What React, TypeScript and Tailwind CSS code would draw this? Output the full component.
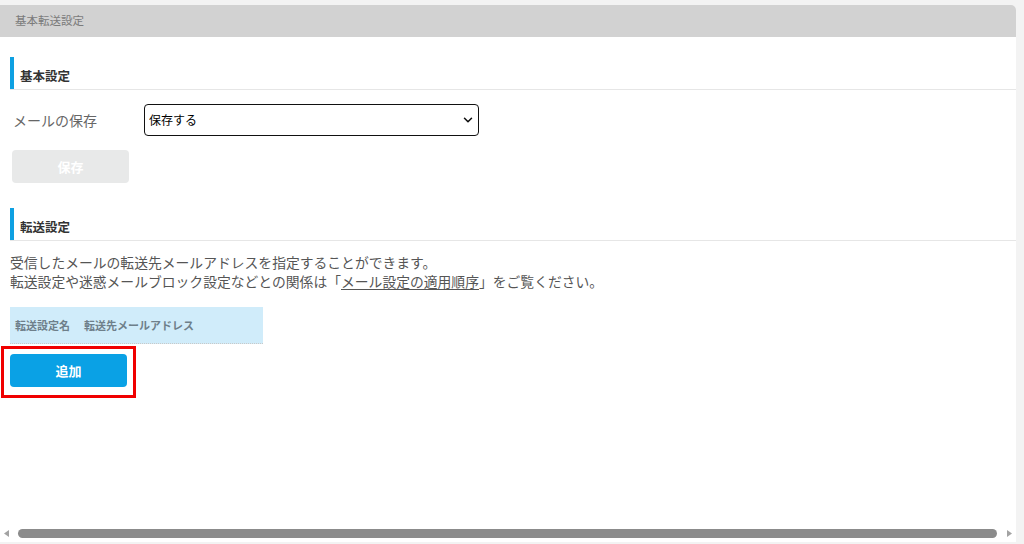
import { ChevronDown } from 'lucide-react';

const font = 'font-["Noto_Sans_CJK_JP","Noto_Sans",sans-serif]';

function SectionHeading({ title }: { title: string }) {
  return (
    <div className="flex h-[33px] border-b border-[#e6e6e6]">
      <div className="w-[4px] bg-[#0ea0e2]" />
      <h3 className="pl-[6px] pt-[11px] text-[12.5px] font-bold leading-[16px] text-[#333]">
        {title}
      </h3>
    </div>
  );
}

export default function App() {
  return (
    <div
      className={`h-[544px] w-[1024px] overflow-hidden bg-[#f3f3f3] pt-[5px] ${font}`}
    >
      <div className="flex h-[537px] w-[1016px] flex-col overflow-hidden rounded-tr-[5px] bg-white">
        <div className="flex h-[32px] shrink-0 items-center bg-[#d2d2d2] px-[15px] text-[11.5px] text-[#7b7b7b]">
          基本転送設定
        </div>

        <div className="flex-1 pl-[10px] pt-[20px]">
          <SectionHeading title="基本設定" />

          <div className="mt-[14px] flex items-center">
            <label className="w-[134px] pl-[3px] text-[14px] text-[#666]">
              メールの保存
            </label>
            <div className="relative w-[335px]">
              <select
                defaultValue="save"
                className="h-[32px] w-full appearance-none rounded-[4px] border-[1.5px] border-[#111] bg-white pl-[4px] text-[12px] text-black outline-none"
              >
                <option value="save">保存する</option>
                <option value="nosave">保存しない</option>
              </select>
              <ChevronDown
                strokeWidth={2.6}
                className="pointer-events-none absolute right-[4px] top-1/2 h-[14px] w-[14px] -translate-y-1/2 text-[#111]"
              />
            </div>
          </div>

          <button
            type="button"
            disabled
            className="ml-[2px] mt-[14px] h-[33px] w-[117px] rounded-[4px] bg-[#e8e9e9] text-[13px] font-bold text-white"
          >
            保存
          </button>

          <div className="mt-[25px]">
            <SectionHeading title="転送設定" />
          </div>

          <div className="mt-[12px] text-[13.8px] leading-[19px] text-[#555]">
            <p>受信したメールの転送先メールアドレスを指定することができます。</p>
            <p>
              転送設定や迷惑メールブロック設定などとの関係は「
              <a href="#" className="underline underline-offset-2">
                メール設定の適用順序
              </a>
              」をご覧ください。
            </p>
          </div>

          <div className="mt-[16px] flex h-[37px] w-[253px] items-center gap-[14px] border-b border-dotted border-[#c9c9c9] bg-[#d0ecfa] px-[5px] text-[11px] font-bold text-[#6e7f8a]">
            <span>転送設定名</span>
            <span>転送先メールアドレス</span>
          </div>

          <div className="relative mt-[10px] w-[117px]">
            <button
              type="button"
              className="h-[33px] w-[117px] rounded-[4px] bg-[#0aa1e5] text-[13px] font-bold text-white"
            >
              追加
            </button>
            <div className="pointer-events-none absolute -left-[9px] -top-[8px] h-[52px] w-[135px] border-[3px] border-[#f00000]" />
          </div>
        </div>

        <div className="flex h-[17px] shrink-0 items-center gap-[9px] px-[4px]">
          <svg width="5" height="7" viewBox="0 0 5 7">
            <path d="M5 0 L0 3.5 L5 7 Z" fill="#a3a3a3" />
          </svg>
          <div className="h-[9px] flex-1 rounded-full bg-[#8b8b8b]" />
          <svg width="5" height="7" viewBox="0 0 5 7" className="ml-[1px]">
            <path d="M0 0 L5 3.5 L0 7 Z" fill="#a3a3a3" />
          </svg>
        </div>
      </div>
    </div>
  );
}
